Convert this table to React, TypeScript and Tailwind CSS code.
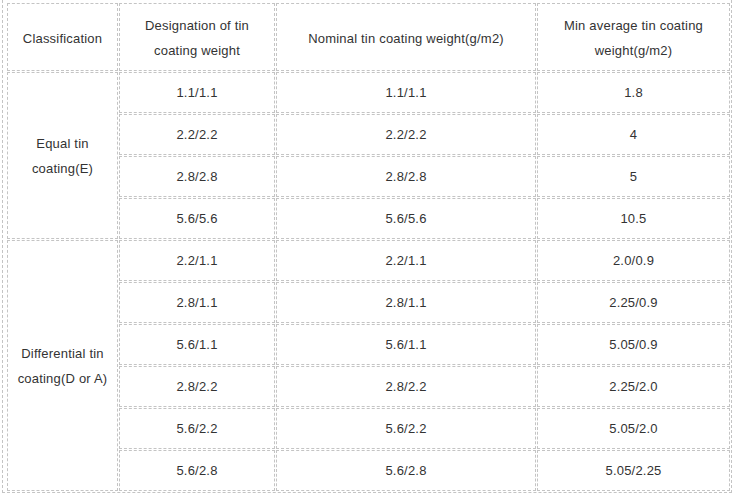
const rows: { cls?: { text: string[]; span: number }; d: string; n: string; m: string }[] = [
  { cls: { text: ['Equal tin', 'coating(E)'], span: 4 }, d: '1.1/1.1', n: '1.1/1.1', m: '1.8' },
  { d: '2.2/2.2', n: '2.2/2.2', m: '4' },
  { d: '2.8/2.8', n: '2.8/2.8', m: '5' },
  { d: '5.6/5.6', n: '5.6/5.6', m: '10.5' },
  { cls: { text: ['Differential tin', 'coating(D or A)'], span: 6 }, d: '2.2/1.1', n: '2.2/1.1', m: '2.0/0.9' },
  { d: '2.8/1.1', n: '2.8/1.1', m: '2.25/0.9' },
  { d: '5.6/1.1', n: '5.6/1.1', m: '5.05/0.9' },
  { d: '2.8/2.2', n: '2.8/2.2', m: '2.25/2.0' },
  { d: '5.6/2.2', n: '5.6/2.2', m: '5.05/2.0' },
  { d: '5.6/2.8', n: '5.6/2.8', m: '5.05/2.25' },
];

const cell = 'border border-dashed border-[#c4c4c4] px-[4px] py-[7px] text-center align-middle font-normal';
const head = 'border border-dashed border-[#c4c4c4] px-[4px] pt-[9px] pb-[7px] text-center align-middle font-normal';

export default function App() {
  return (
    <div className="h-[504px] w-[737px] bg-white font-['Liberation_Sans',Arial,sans-serif] text-[13px] leading-[25px] tracking-[0.2px] text-[#333]">
      <div className="ml-[2px] w-[730px] border-x border-b border-dashed border-[#c4c4c4] pt-[2px] pl-[3px]">
        <table className="w-[725px] table-fixed border-separate border-spacing-[1px]">
          <colgroup>
            <col className="w-[111px]" />
            <col className="w-[156px]" />
            <col className="w-[260px]" />
            <col className="w-[193px]" />
          </colgroup>
          <thead>
            <tr>
              <th className={head}>Classification</th>
              <th className={head}>
                Designation of tin
                <br />
                coating weight
              </th>
              <th className={head}>Nominal tin coating weight(g/m2)</th>
              <th className={head}>
                Min average tin coating
                <br />
                weight(g/m2)
              </th>
            </tr>
          </thead>
          <tbody>
            {rows.map((r, i) => (
              <tr key={i}>
                {r.cls && (
                  <td rowSpan={r.cls.span} className={cell}>
                    {r.cls.text[0]}
                    <br />
                    {r.cls.text[1]}
                  </td>
                )}
                <td className={cell}>{r.d}</td>
                <td className={cell}>{r.n}</td>
                <td className={cell}>{r.m}</td>
              </tr>
            ))}
          </tbody>
        </table>
      </div>
    </div>
  );
}
